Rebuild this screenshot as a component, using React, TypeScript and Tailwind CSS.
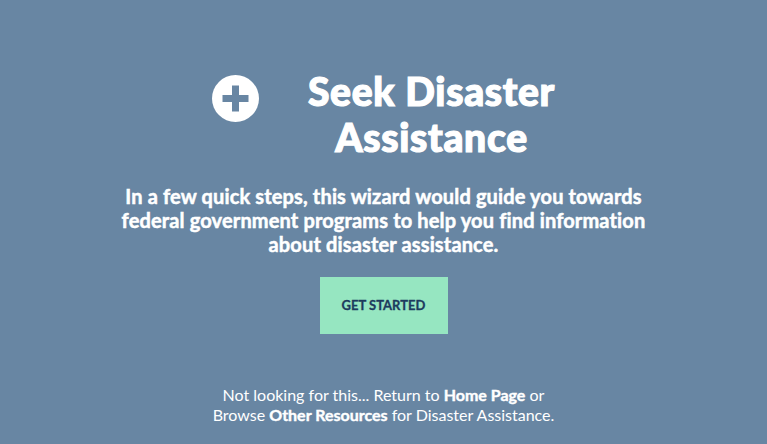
import React from "react";

const PlusCircle = () => (
  <svg width="47" height="47" viewBox="0 0 47 47" className="shrink-0">
    <circle cx="23.5" cy="23.5" r="23.5" fill="#ffffff" />
    <rect x="10.5" y="20" width="26" height="7" fill="#6886a3" />
    <rect x="20" y="10.5" width="7" height="26" fill="#6886a3" />
  </svg>
);

const App = () => {
  return (
    <div
      className="min-h-screen bg-[#6886a3] flex flex-col items-center pt-[68px] text-white"
      style={{ fontFamily: "Lato, 'Open Sans', sans-serif" }}
    >
      <div className="flex items-start gap-[49px]">
        <div className="mt-[7px]">
          <PlusCircle />
        </div>
        <h1 className="text-[39px] leading-[46px] font-black text-center tracking-[0.7px] [-webkit-text-stroke:1.2px_white]">
          Seek Disaster
          <br />
          Assistance
        </h1>
      </div>

      <p className="mt-[24px] max-w-[560px] text-center text-[20px] leading-[24px] font-bold tracking-[0.15px] [-webkit-text-stroke:0.5px_white]">
        In a few quick steps, this wizard would guide you towards federal government programs to help you find information about disaster assistance.
      </p>

      <button className="mt-[21px] w-[128px] h-[57px] bg-[#96e6c1] text-[#1d3b5e] text-[13px] font-bold uppercase [-webkit-text-stroke:0.3px_#1d3b5e]">
        Get Started
      </button>

      <p className="mt-[51px] text-center text-[16px] leading-[20px]">
        Not looking for this... Return to <a className="font-bold [-webkit-text-stroke:0.4px_white]">Home Page</a> or
        <br />
        Browse <a className="font-bold [-webkit-text-stroke:0.4px_white]">Other Resources</a> for Disaster Assistance.
      </p>
    </div>
  );
};

export default App;
